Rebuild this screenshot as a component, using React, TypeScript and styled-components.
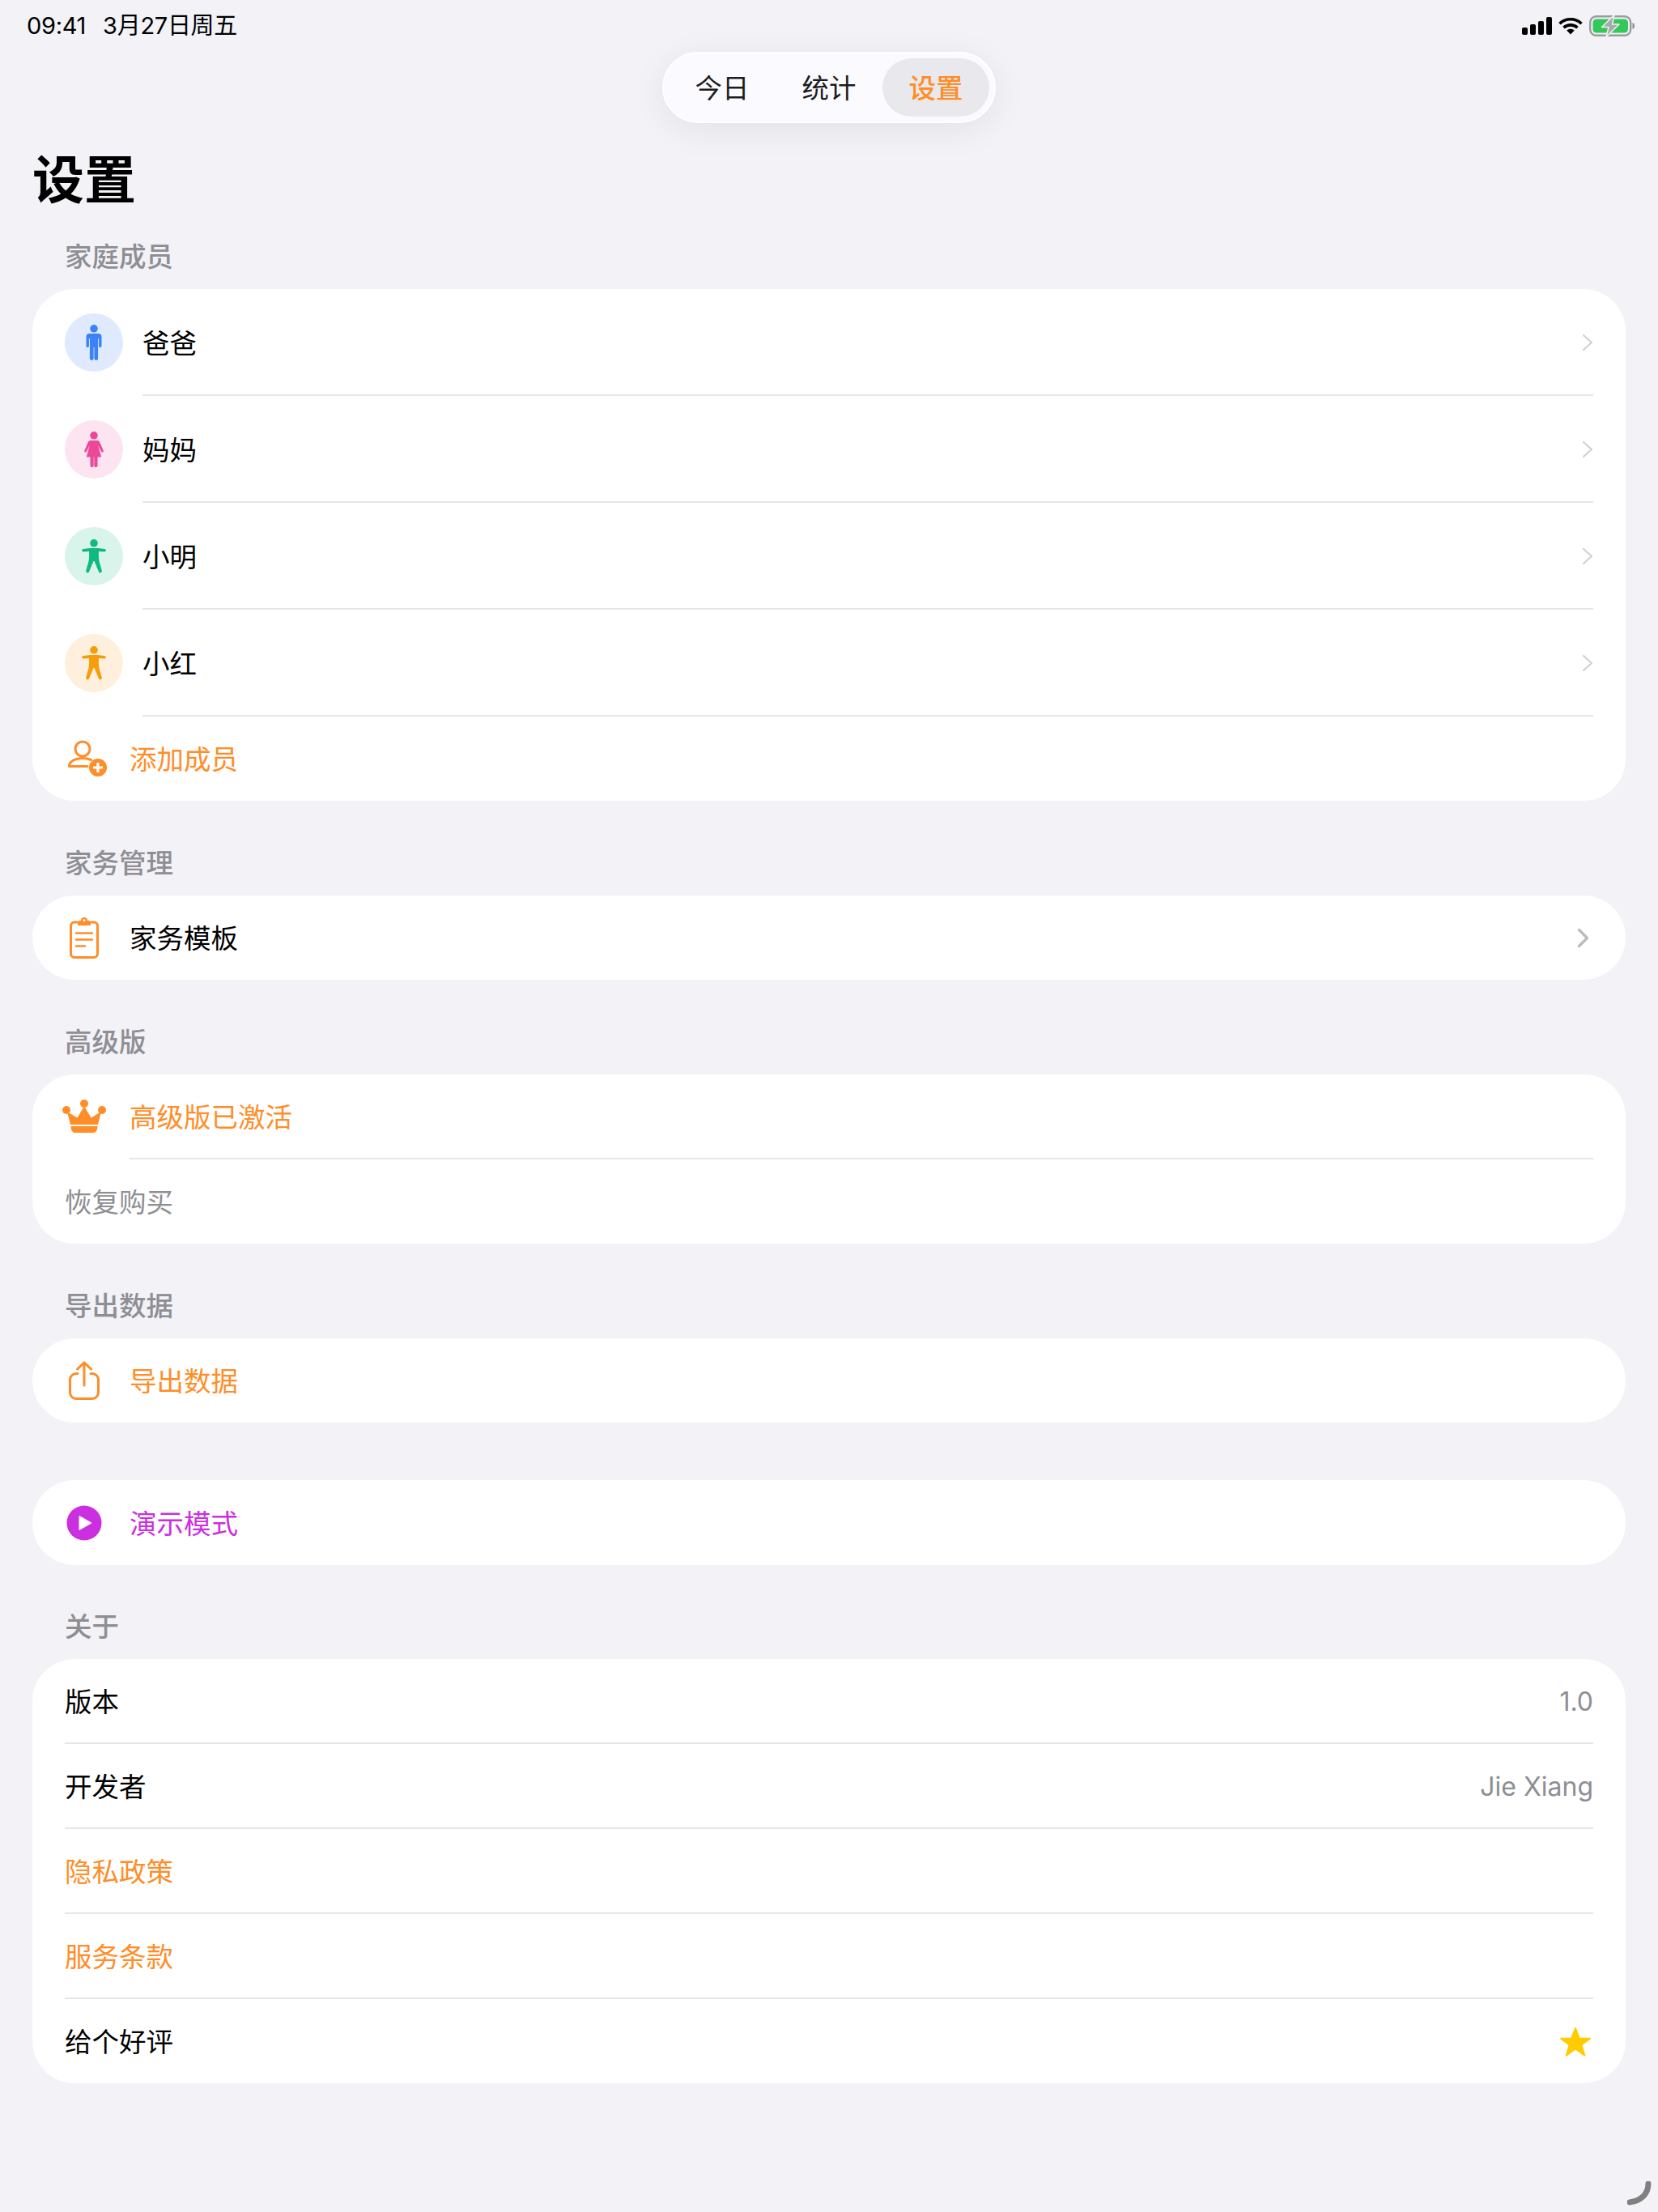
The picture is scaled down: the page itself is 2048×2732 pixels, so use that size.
import React from "react";
import styled, { createGlobalStyle } from "styled-components";

const ORANGE = "#ff8d28";
const PURPLE = "#cb30e0";
const GRAY = "#8e8e93";

const Global = createGlobalStyle`
  html, body { margin: 0; padding: 0; background: #f2f2f7; }
  * { box-sizing: border-box; }
  body { font-family: Inter, "Noto Sans CJK SC", sans-serif; color: #000; }
`;

const Page = styled.div`
  position: relative;
  width: 2048px;
  height: 2732px;
  background: #f2f2f7;
  overflow: hidden;
`;
const StatusBar = styled.div`
  height: 64px;
  padding: 0 29px 0 33px;
  display: flex;
  align-items: center;
  justify-content: space-between;
  font-size: 29px;
  line-height: 40px;
  font-weight: 400;
  letter-spacing: -0.3px;
`;
const StatusText = styled.div`
  display: flex;
  align-items: center;
  gap: 21px;
`;
const StatusIcons = styled.div`
  display: flex;
  align-items: center;
  gap: 8px;
`;
const TabRow = styled.div`
  display: flex;
  justify-content: center;
`;
const TabPill = styled.div`
  display: flex;
  height: 88px;
  padding: 6px;
  background: #fbfbff;
  border: 2px solid #fff;
  border-radius: 44px;
  box-shadow: 0 8px 44px rgba(0, 0, 0, 0.07);
`;
const Tab = styled.div<{ $active?: boolean }>`
  width: 132px;
  height: 72px;
  padding-bottom: 3px;
  border-radius: 36px;
  display: flex;
  align-items: center;
  justify-content: center;
  font-size: 33.5px;
  font-weight: ${(p) => (p.$active ? 500 : 400)};
  color: ${(p) => (p.$active ? ORANGE : "#1c1c1e")};
  background: ${(p) => (p.$active ? "#e9e9ed" : "transparent")};
`;
const Content = styled.div`
  padding: 0 40px;
`;
const Title = styled.h1`
  margin: 30px 0 0;
  height: 80px;
  line-height: 80px;
  font-size: 64px;
  font-weight: 700;
`;
const Section = styled.section<{ $gap: number }>`
  margin-top: ${(p) => p.$gap}px;
`;
const SectionHeader = styled.div`
  height: 48px;
  line-height: 48px;
  margin-bottom: 16px;
  padding-left: 40px;
  font-size: 33.5px;
  font-weight: 500;
  color: ${GRAY};
`;
const Card = styled.div`
  background: #fff;
  border-radius: 52px;
  overflow: hidden;
`;
const Row = styled.div<{ $h?: number }>`
  height: ${(p) => p.$h ?? 103}px;
  padding: 0 40px;
  display: flex;
  align-items: center;
`;
const MemberRow = styled(Row)`
  padding-top: 2px;
`;
const IconSlot = styled.div`
  width: 80px;
  flex: none;
  display: flex;
  align-items: center;
  justify-content: center;
  margin-left: -16px;
  margin-right: 16px;
`;
const Avatar = styled.div<{ $bg: string }>`
  width: 72px;
  height: 72px;
  flex: none;
  margin-right: 24px;
  border-radius: 50%;
  background: ${(p) => p.$bg};
  display: flex;
  align-items: center;
  justify-content: center;
`;
const Label = styled.span<{ $color?: string }>`
  flex: 1;
  padding-top: 2px;
  font-size: 33.5px;
  line-height: 48px;
  color: ${(p) => p.$color ?? "#000"};
`;
const Value = styled.span`
  padding-top: 2px;
  font-size: 32px;
  color: ${GRAY};
`;
const Separator = styled.div<{ $inset: number }>`
  height: 2px;
  margin-left: ${(p) => p.$inset}px;
  margin-right: 40px;
  background: #e6e6e9;
`;
const TrailingIcon = styled.div<{ $inset: number }>`
  display: flex;
  margin-right: ${(p) => p.$inset}px;
`;
const Spinner = styled.svg`
  position: absolute;
  right: 8px;
  bottom: 8px;
`;

const Signal = () => (
  <svg width="37" height="22" viewBox="0 0 37 22" fill="#000">
    <rect x="0" y="13" width="7" height="9" rx="2" />
    <rect x="10" y="9" width="7" height="13" rx="2" />
    <rect x="20" y="5" width="7" height="17" rx="2" />
    <rect x="30" y="0" width="7" height="22" rx="2" />
  </svg>
);
const Wifi = () => (
  <svg width="30" height="22" viewBox="0 0 30 22" fill="none" stroke="#000" strokeWidth="3.6">
    <path d="M1.500 8.200C9 1 21 1 28.500 8.200" />
    <path d="M6.500 13.200c4.800-4.400 12.200-4.400 17 0" />
    <path d="M15 21.500l-4.800-5c2.800-2.400 6.800-2.400 9.600 0z" fill="#000" stroke="none" />
  </svg>
);
const Battery = () => (
  <svg width="56" height="28" viewBox="0 0 56 28">
    <rect x="1.200" y="2.200" width="50" height="23.600" rx="7.500" fill="none" stroke="#9c9c9f" strokeWidth="2.400" />
    <rect x="4.500" y="5.500" width="43.500" height="17" rx="4.500" fill="#34c759" />
    <path d="M53.500 10c1.500.5 2.500 2.200 2.500 4s-1 3.500-2.500 4z" fill="#8a8a8d" />
    <path d="M31 0.500 L15.500 15.500 H24 L21 27.500 L37 12 H28.500 Z" fill="#a9a9ac" stroke="#f2f2f7" strokeWidth="1.500" strokeLinejoin="round" />
  </svg>
);
const Chevron = () => (
  <svg width="14" height="22" viewBox="0 0 14 22" fill="none" stroke="#d1d1d6" strokeWidth="2.200" strokeLinecap="round" strokeLinejoin="round">
    <path d="M2 2l10 9-10 9" />
  </svg>
);
const BigChevron = () => (
  <svg width="15" height="25" viewBox="0 0 15 25" fill="none" stroke="#bcbcc0" strokeWidth="3.400" strokeLinecap="round" strokeLinejoin="round">
    <path d="M2.500 2.500l10 10-10 10" />
  </svg>
);
const FigureStand = ({ c }: { c: string }) => (
  <svg width="20" height="44" viewBox="0 0 20 44" fill={c}>
    <circle cx="10" cy="4.800" r="4.800" />
    <path d="M4.500 11h11a4 4 0 0 1 4 4v11.500a1.700 1.700 0 0 1-3.400 0V17h-1v25a2.400 2.400 0 0 1-4.700 0V28h-.8v14a2.400 2.400 0 0 1-4.700 0V17h-1v9.500a1.700 1.700 0 0 1-3.400 0V15a4 4 0 0 1 4-4z" />
  </svg>
);
const FigureDress = ({ c }: { c: string }) => (
  <svg width="24" height="44" viewBox="0 0 24 44" fill={c}>
    <circle cx="12" cy="4.800" r="4.800" />
    <path d="M8 11h8c1.500 0 2.600.8 3.200 2.200l4.500 10.300c.8 1.800-1.800 2.900-2.700 1.100L17.200 17l4 14.500H16.500V42a2.100 2.100 0 0 1-4.200 0V31.500h-.6V42a2.100 2.100 0 0 1-4.200 0V31.500H2.800l4-14.500L3 24.600c-.9 1.800-3.500.7-2.700-1.100l4.500-10.300C5.400 11.800 6.500 11 8 11z" />
  </svg>
);
const FigureOpen = ({ c }: { c: string }) => (
  <svg width="30" height="42" viewBox="0 0 30 42" fill={c}>
    <circle cx="15" cy="4.800" r="4.800" />
    <path d="M1.800 12l8.200-1h10l8.200 1c2.300.3 2.100 3.600-.3 3.400L21 14.900c-.3 5-.2 8.500.6 12.500l3.200 11.300c.7 2.700-3 3.800-3.900 1.200L15.500 27h-1L9.100 39.900c-.9 2.600-4.600 1.500-3.900-1.200l3.200-11.300c.8-4 .9-7.500.6-12.500l-6.900.5c-2.400.2-2.600-3.100-.3-3.400z" />
  </svg>
);
const AddPerson = () => (
  <svg width="62" height="46" viewBox="-11 0 62 46" fill="none" stroke={ORANGE} strokeWidth="3" strokeLinecap="round">
    <circle cx="18" cy="11" r="9" />
    <path d="M1.500 32.500c0-6 7-10 16.500-10 4 0 7.500.7 10.500 2M3 32.500h21" />
    <circle cx="37" cy="34" r="11" fill={ORANGE} stroke="none" />
    <path d="M37 28v12M31 34h12" stroke="#fff" strokeWidth="3.200" strokeLinecap="butt" />
  </svg>
);
const Clipboard = () => (
  <svg width="36" height="52" viewBox="0 0 36 52" fill="none" stroke={ORANGE} strokeWidth="3" strokeLinecap="round">
    <path d="M9 7H6a4.500 4.500 0 0 0-4.500 4.500V46A4.500 4.500 0 0 0 6 50.500h24a4.500 4.500 0 0 0 4.500-4.500V11.500A4.500 4.500 0 0 0 30 7h-3" />
    <path d="M10 11V7.500A2.500 2.500 0 0 1 12.500 5H14a4 4 0 0 1 8 0h1.500A2.500 2.500 0 0 1 26 7.500V11z" fill={ORANGE} stroke="none" />
    <circle cx="18" cy="4.800" r="1.500" fill="#fff" stroke="none" />
    <path d="M8 20.500h20M8 28.500h20M8 36.500h11" strokeWidth="2.400" />
  </svg>
);
const Share = () => (
  <svg width="38" height="48" viewBox="0 0 38 48" fill="none" stroke={ORANGE} strokeWidth="3" strokeLinecap="round" strokeLinejoin="round">
    <path d="M11 15.500H9A7.500 7.500 0 0 0 1.500 23v16A7.500 7.500 0 0 0 9 46.500h20a7.500 7.500 0 0 0 7.500-7.500V23a7.500 7.500 0 0 0-7.500-7.500h-2" />
    <path d="M19 30V2M10.500 10L19 1.800 27.500 10" />
  </svg>
);
const Crown = () => (
  <svg width="54" height="42" viewBox="0 0 54 42" fill={ORANGE}>
    <circle cx="27" cy="5" r="5" />
    <circle cx="5" cy="13" r="5" />
    <circle cx="49" cy="13" r="5" />
    <path d="M6 15l12.500 7.500L27 8l8.500 14.500L48 15l-4 16H10z" />
    <path d="M10.500 33h33c0 4.500-2 8-5 8h-23c-3 0-5-3.500-5-8z" />
  </svg>
);
const Play = () => (
  <svg width="44" height="44" viewBox="0 0 44 44">
    <circle cx="22" cy="22" r="21.500" fill={PURPLE} />
    <path d="M16 13.500v17l15-8.500z" fill="#fff" stroke="#fff" strokeWidth="1" strokeLinejoin="round" />
  </svg>
);
const Star = () => (
  <svg width="38" height="37" viewBox="0 0 40 38" fill="#ffcc00" stroke="#ffcc00" strokeWidth="2" strokeLinejoin="round">
    <path d="M20 1.500l5 13.500h14l-11.200 8.500L32 37 20 28.500 8 37l4.200-13.500L1 15h14z" />
  </svg>
);

const members = [
  { name: "爸爸", bg: "#dfeafe", icon: <FigureStand c="#3b82f6" /> },
  { name: "妈妈", bg: "#fce4f1", icon: <FigureDress c="#ec4899" /> },
  { name: "小明", bg: "#d9f4ea", icon: <FigureOpen c="#10b981" /> },
  { name: "小红", bg: "#fef0dc", icon: <FigureOpen c="#f59e0b" /> },
];

export default function App() {
  return (
    <Page>
      <Global />
      <StatusBar>
        <StatusText>
          <span>09:41</span>
          <span>3月27日周五</span>
        </StatusText>
        <StatusIcons>
          <Signal />
          <Wifi />
          <Battery />
        </StatusIcons>
      </StatusBar>
      <TabRow>
        <TabPill>
          <Tab>今日</Tab>
          <Tab>统计</Tab>
          <Tab $active>设置</Tab>
        </TabPill>
      </TabRow>
      <Content>
        <Title>设置</Title>
        <Section $gap={31}>
          <SectionHeader>家庭成员</SectionHeader>
          <Card>
            {members.map((m) => (
              <React.Fragment key={m.name}>
                <MemberRow $h={130}>
                  <Avatar $bg={m.bg}>{m.icon}</Avatar>
                  <Label>{m.name}</Label>
                  <Chevron />
                </MemberRow>
                <Separator $inset={136} />
              </React.Fragment>
            ))}
            <Row $h={104}>
              <IconSlot>
                <AddPerson />
              </IconSlot>
              <Label $color={ORANGE}>添加成员</Label>
            </Row>
          </Card>
        </Section>
        <Section $gap={53}>
          <SectionHeader>家务管理</SectionHeader>
          <Card>
            <Row $h={104}>
              <IconSlot>
                <Clipboard />
              </IconSlot>
              <Label>家务模板</Label>
              <TrailingIcon $inset={5}>
                <BigChevron />
              </TrailingIcon>
            </Row>
          </Card>
        </Section>
        <Section $gap={53}>
          <SectionHeader>高级版</SectionHeader>
          <Card>
            <Row>
              <IconSlot>
                <Crown />
              </IconSlot>
              <Label $color={ORANGE}>高级版已激活</Label>
            </Row>
            <Separator $inset={120} />
            <Row $h={104}>
              <Label $color={GRAY}>恢复购买</Label>
            </Row>
          </Card>
        </Section>
        <Section $gap={53}>
          <SectionHeader>导出数据</SectionHeader>
          <Card>
            <Row $h={104}>
              <IconSlot>
                <Share />
              </IconSlot>
              <Label $color={ORANGE}>导出数据</Label>
            </Row>
          </Card>
        </Section>
        <Section $gap={71}>
          <Card>
            <Row $h={105}>
              <IconSlot>
                <Play />
              </IconSlot>
              <Label $color={PURPLE}>演示模式</Label>
            </Row>
          </Card>
        </Section>
        <Section $gap={52}>
          <SectionHeader>关于</SectionHeader>
          <Card>
            <Row>
              <Label>版本</Label>
              <Value>1.0</Value>
            </Row>
            <Separator $inset={40} />
            <Row>
              <Label>开发者</Label>
              <Value>Jie Xiang</Value>
            </Row>
            <Separator $inset={40} />
            <Row>
              <Label $color={ORANGE}>隐私政策</Label>
            </Row>
            <Separator $inset={40} />
            <Row>
              <Label $color={ORANGE}>服务条款</Label>
            </Row>
            <Separator $inset={40} />
            <Row $h={104}>
              <Label>给个好评</Label>
              <TrailingIcon $inset={3}>
                <Star />
              </TrailingIcon>
            </Row>
          </Card>
        </Section>
      </Content>
      <Spinner width="30" height="30" viewBox="0 0 30 30" fill="none" stroke="#808080" strokeWidth="7" strokeLinecap="round">
        <path d="M26 3c0 12-8 21-23 23" />
      </Spinner>
    </Page>
  );
}
